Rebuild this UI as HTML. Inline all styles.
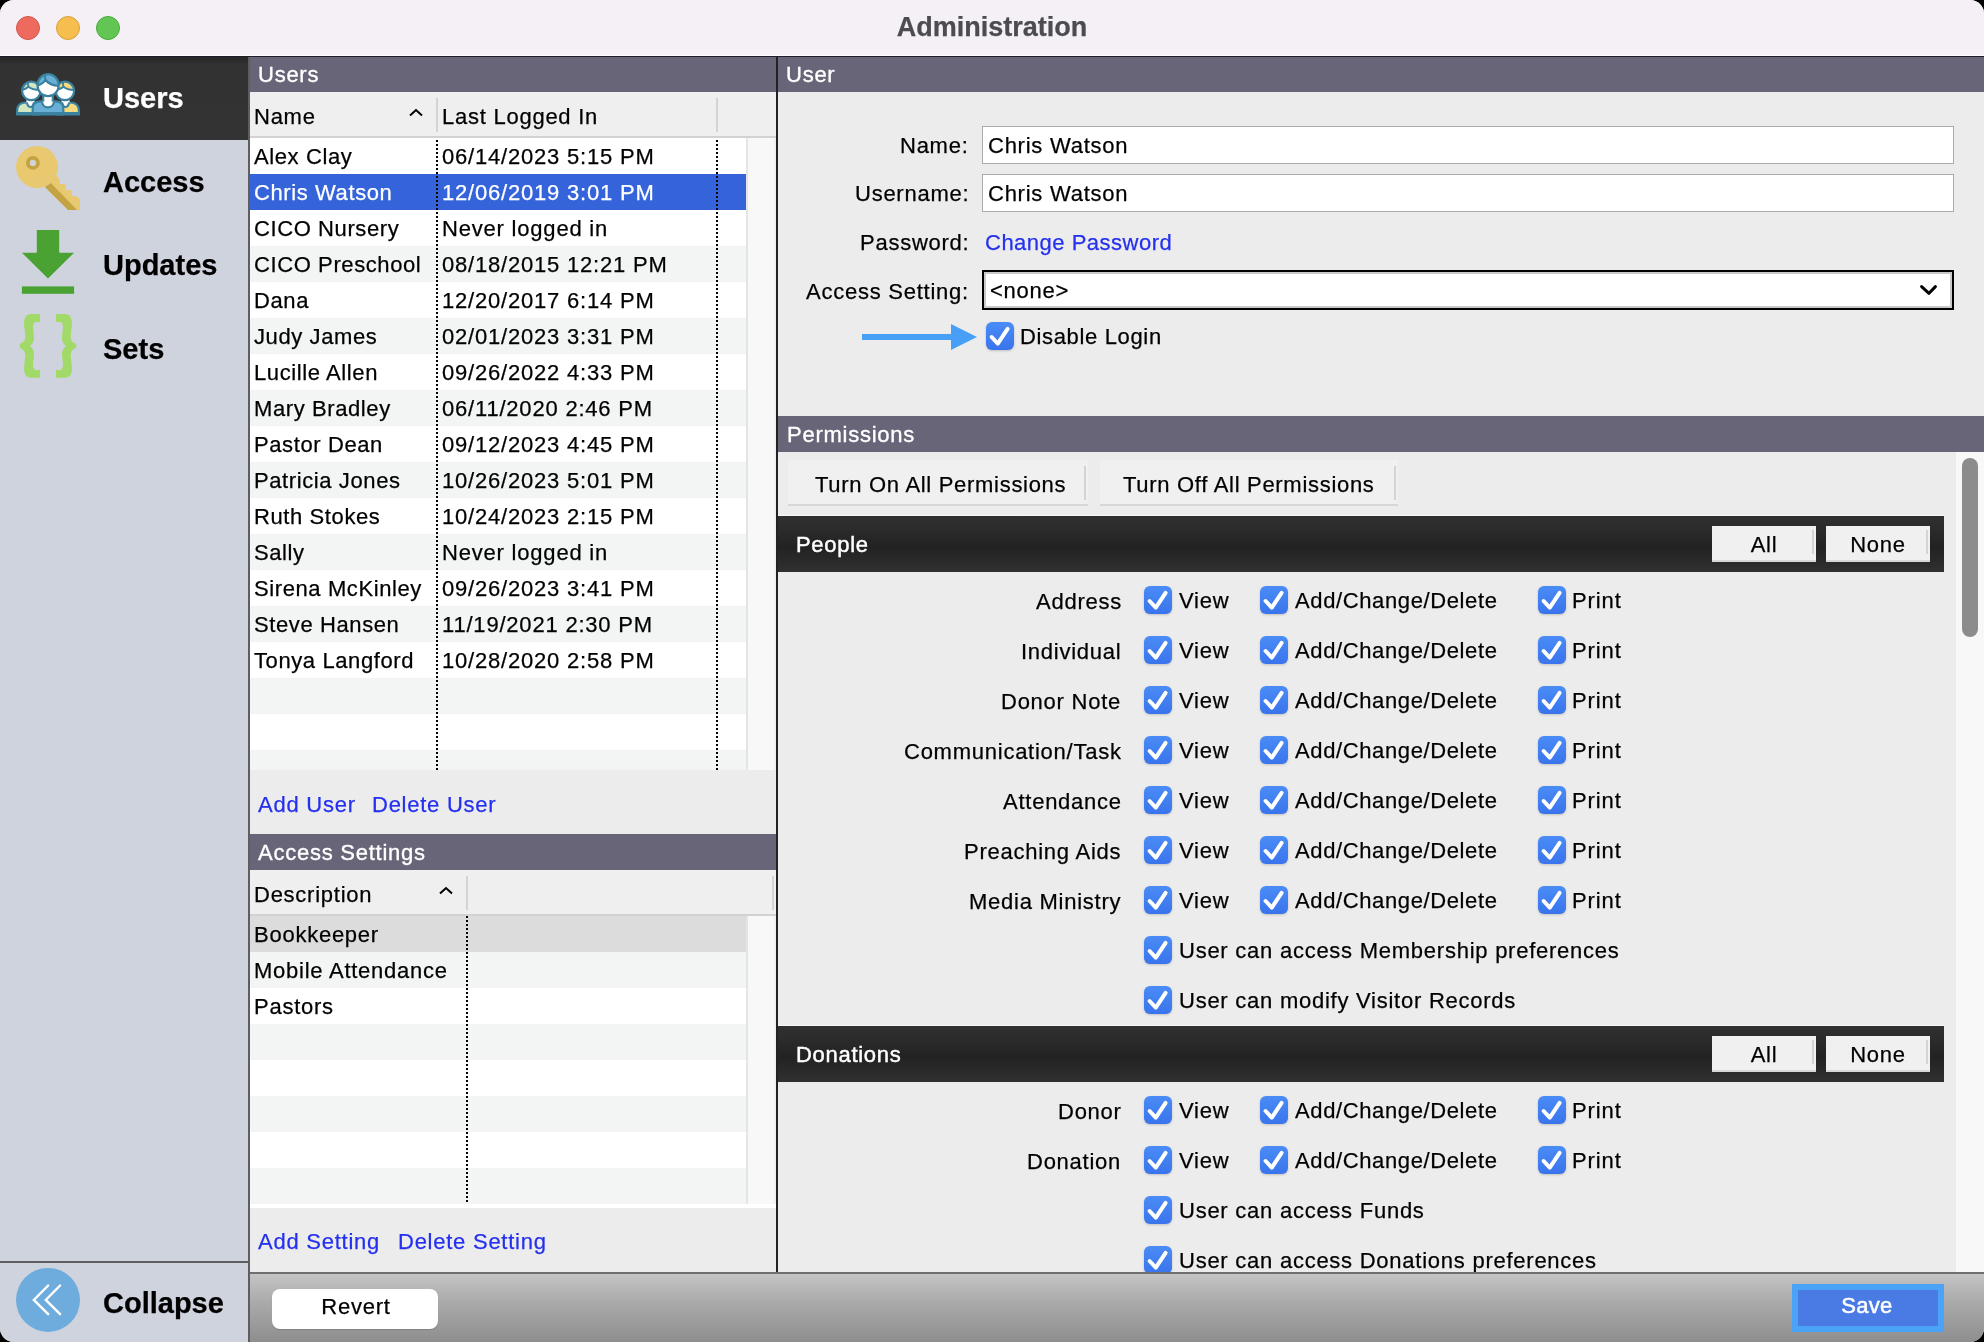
<!DOCTYPE html><html><head><meta charset="utf-8"><style>
html,body{margin:0;padding:0;background:#000;}
body{width:1984px;height:1342px;overflow:hidden;position:relative;font-family:"Liberation Sans",sans-serif;}
#win{position:absolute;left:0;top:0;width:1984px;height:1342px;border-radius:14px;overflow:hidden;background:#ECECEC;}
.t{position:absolute;white-space:nowrap;will-change:transform;-webkit-text-stroke-width:0.25px;}
</style></head><body><div id="win">
<div style="position:absolute;left:0px;top:0px;width:1984px;height:55px;background:#F4F0F6;"></div><div style="position:absolute;left:0px;top:55px;width:1984px;height:1px;background:#FFFFFF;"></div><div style="position:absolute;left:0px;top:56px;width:1984px;height:1px;background:#1F1E28;"></div><div style="position:absolute;left:16px;top:16px;width:22px;height:22px;border-radius:50%;background:#EE6A5E;border:1px solid #D5564B;"></div><div style="position:absolute;left:56px;top:16px;width:22px;height:22px;border-radius:50%;background:#F5BE4F;border:1px solid #D9A13A;"></div><div style="position:absolute;left:96px;top:16px;width:22px;height:22px;border-radius:50%;background:#62C554;border:1px solid #4CA93E;"></div><div class="t" style="left:692px;width:600px;text-align:center;top:14.14px;font-size:27px;line-height:27px;color:#4C4B51;font-weight:bold;letter-spacing:0px;">Administration</div><div style="position:absolute;left:0px;top:57px;width:248px;height:1285px;background:#CFD3DE;"></div><div style="position:absolute;left:248px;top:57px;width:2px;height:1285px;background:#5E5E5E;"></div><div style="position:absolute;left:0px;top:57px;width:248px;height:83px;background:linear-gradient(to bottom,#262626 0px,#323232 8px,#333333 100%);"></div><div class="t" style="left:103px;top:84.45px;font-size:29px;line-height:29px;color:#FFFFFF;font-weight:bold;letter-spacing:0px;">Users</div><div class="t" style="left:103px;top:168.45px;font-size:29px;line-height:29px;color:#000;font-weight:bold;letter-spacing:0px;">Access</div><div class="t" style="left:103px;top:251.45px;font-size:29px;line-height:29px;color:#000;font-weight:bold;letter-spacing:0px;">Updates</div><div class="t" style="left:103px;top:335.45px;font-size:29px;line-height:29px;color:#000;font-weight:bold;letter-spacing:0px;">Sets</div><svg style="position:absolute;left:10px;top:66px" width="80" height="56" viewBox="0 0 80 56">
<defs>
<clipPath id="hc"><ellipse cx="38.1" cy="19.2" rx="10.6" ry="11"/></clipPath>
<clipPath id="hl"><circle cx="21.3" cy="24.9" r="9.2"/></clipPath>
<clipPath id="hr"><circle cx="54.9" cy="24.9" r="9.2"/></clipPath>
</defs>
<g stroke="#3A82A0" stroke-width="2.2" stroke-linejoin="round">
<path d="M7.1,48.5 L7.1,45 C7.1,39.5 10.5,36.5 16,36.5 L24,36.5 C28,36.5 30,39 30,43 L30,48.5 Z" fill="#D3E6C2"/>
<path d="M68.9,48.5 L68.9,45 C68.9,39.5 65.5,36.5 60,36.5 L52,36.5 C48,36.5 46,39 46,43 L46,48.5 Z" fill="#F6DA7E"/>
<rect x="16.5" y="30" width="8" height="7" fill="#FFFFFF" stroke="none"/>
<rect x="51.5" y="30" width="8" height="7" fill="#FFFFFF" stroke="none"/>
<path d="M16.8,36.5 C17.5,39.5 18.8,41 20.5,41 C22,41 23.3,39.5 24,36.5" fill="#FFFFFF"/>
<path d="M59.2,36.5 C58.5,39.5 57.2,41 55.5,41 C54,41 52.7,39.5 52,36.5" fill="#FFFFFF"/>
<circle cx="21.3" cy="24.9" r="9.2" fill="#FFFFFF" stroke="none"/>
<circle cx="54.9" cy="24.9" r="9.2" fill="#FFFFFF" stroke="none"/>
</g>
<g clip-path="url(#hl)"><path d="M11,24.5 C14,23.5 16.5,22.5 18.4,20.7 C20.5,23 24,24 31,24 L31,14 L11,14 Z" fill="#D3E6C2" stroke="#3A82A0" stroke-width="2"/><path d="M18.4,20.7 L17.6,15" stroke="#3A82A0" stroke-width="1.8"/></g>
<g clip-path="url(#hr)"><path d="M45,24.5 C48,23.5 51.5,22.5 53.4,20.7 C55.5,23 59,24 65,24 L65,14 L45,14 Z" fill="#F6DA7E" stroke="#3A82A0" stroke-width="2"/><path d="M53.4,20.7 L52.6,15" stroke="#3A82A0" stroke-width="1.8"/></g>
<g fill="none" stroke="#3A82A0" stroke-width="2.2"><circle cx="21.3" cy="24.9" r="9.2"/><circle cx="54.9" cy="24.9" r="9.2"/></g>
<g stroke="#3A82A0" stroke-width="2.2" stroke-linejoin="round">
<path d="M22.7,48.5 L22.7,42.5 C22.7,38 25.5,35.3 30.5,35.3 L45.5,35.3 C50.5,35.3 53.3,38 53.3,42.5 L53.3,48.5 Z" fill="#6AAFD6"/>
<rect x="33" y="27" width="10" height="9" fill="#FFFFFF" stroke="none"/>
<path d="M32,35.3 C32,39.2 34.6,41.4 38,41.4 C41.4,41.4 44,39.2 44,35.3" fill="#FFFFFF"/>
<line x1="33.2" y1="28" x2="33.2" y2="35.5"/><line x1="42.8" y1="28" x2="42.8" y2="35.5"/>
<ellipse cx="38.1" cy="19.2" rx="10.6" ry="11" fill="#FFFFFF" stroke="none"/>
</g>
<g clip-path="url(#hc)"><path d="M26,20 C30,19 33.5,17 35.5,14 C38.5,18 43,19.8 50,19.8 L50,5 L26,5 Z" fill="#6AAFD6" stroke="#3A82A0" stroke-width="2.2"/><path d="M35.5,14 L34.6,7" stroke="#3A82A0" stroke-width="2"/></g>
<ellipse cx="38.1" cy="19.2" rx="10.6" ry="11" fill="none" stroke="#3A82A0" stroke-width="2.2"/>
<rect x="6" y="46" width="64" height="3" fill="#3A82A0"/>
</svg><svg style="position:absolute;left:10px;top:140px" width="80" height="75" viewBox="0 0 80 75">
<path d="M46.1,35.2 L49.7,39.4 L49.7,44 L55.6,44 L55.6,50 L61.6,50.3 L61.8,56 L66,56 L70,59 L70,69.9 L58.1,69.9 L34.9,47 L40.8,43 Z" fill="#E8C96F"/>
<path d="M34.9,47 L40.8,43 L67,69.9 L58.1,69.9 Z" fill="#C4A344"/>
<circle cx="27" cy="27" r="21" fill="#E8C96F"/>
<circle cx="22.9" cy="22.9" r="5" fill="none" stroke="#C4A344" stroke-width="3.8"/>
<circle cx="22.9" cy="22.9" r="3" fill="#CFD3DE"/>
</svg><svg style="position:absolute;left:10px;top:222px" width="80" height="80" viewBox="0 0 80 80">
<path d="M26.8,8 L49.2,8 L49.2,30.7 L64.1,30.7 L38,56.6 L11.9,30.7 L26.8,30.7 Z" fill="#4AA232"/>
<rect x="11.9" y="64.4" width="52.2" height="7.4" fill="#4AA232"/>
</svg><svg style="position:absolute;left:10px;top:306px" width="80" height="80" viewBox="0 0 80 80">
<g fill="#A2DA6A">
<path d="M30.1,8 L21,8 C16,8 14,12 14,18 L15.2,29 C15.6,34.5 13.5,36.5 9.8,37.8 L9.8,42 C13.5,43.5 15.6,45.5 15.2,51 L14,62 C14,68 16,71.8 21,71.8 L30.1,71.8 L30.1,64 L27,64 C24,64 23,62 23,58.5 L24,50 C24.5,45 22.5,42 20,40 C22.5,38 24.5,35 24,30 L23,21.5 C23,18 24,16 27,16 L30.1,16 Z"/>
<path d="M45.9,8 L55,8 C60,8 62,12 62,18 L60.8,29 C60.4,34.5 62.5,36.5 66.2,37.8 L66.2,42 C62.5,43.5 60.4,45.5 60.8,51 L62,62 C62,68 60,71.8 55,71.8 L45.9,71.8 L45.9,64 L49,64 C52,64 53,62 53,58.5 L52,50 C51.5,45 53.5,42 56,40 C53.5,38 51.5,35 52,30 L53,21.5 C53,18 52,16 49,16 L45.9,16 Z"/>
</g></svg><div style="position:absolute;left:0px;top:1261px;width:248px;height:2px;background:#5E5E5E;"></div><svg style="position:absolute;left:10px;top:1262px" width="80" height="80" viewBox="0 0 80 80">
<circle cx="38" cy="37.9" r="32" fill="#6EACDE"/>
<path d="M38.2,23.5 L23.8,37.9 L38.2,52.2 M50.1,23.5 L35.8,37.9 L50.1,52.2" fill="none" stroke="#fff" stroke-width="2.4" stroke-linecap="round" stroke-linejoin="miter"/>
</svg><div class="t" style="left:103px;top:1289.45px;font-size:29px;line-height:29px;color:#000;font-weight:bold;letter-spacing:0px;">Collapse</div><div style="position:absolute;left:250px;top:57px;width:526px;height:35px;background:#686579;"></div><div class="t" style="left:258px;top:64.37px;font-size:22px;line-height:22px;color:#FFFFFF;font-weight:normal;letter-spacing:0.75px;-webkit-text-stroke:0.35px #fff;">Users</div><div style="position:absolute;left:250px;top:92px;width:526px;height:44px;background:#EFEFEF;"></div><div style="position:absolute;left:250px;top:136px;width:526px;height:2px;background:#D2D2D2;"></div><div class="t" style="left:254px;top:106.37px;font-size:22px;line-height:22px;color:#000;font-weight:normal;letter-spacing:0.75px;">Name</div><svg style="position:absolute;left:408px;top:108px" width="16" height="10" viewBox="0 0 16 10"><path d="M2,7.6 L8,2 L14,7.6" fill="none" stroke="#000" stroke-width="2"/></svg><div style="position:absolute;left:436px;top:98px;width:2px;height:34px;background:#D4D4D4;"></div><div class="t" style="left:442px;top:106.37px;font-size:22px;line-height:22px;color:#000;font-weight:normal;letter-spacing:0.75px;">Last Logged In</div><div style="position:absolute;left:716px;top:98px;width:2px;height:34px;background:#D4D4D4;"></div><div style="position:absolute;left:746px;top:138px;width:30px;height:632px;background:#F8F8F8;border-left:2px solid #E5E5E5;border-right:2px solid #F0F0F0;box-sizing:border-box;"></div><div style="position:absolute;left:250px;top:138px;width:496px;height:36px;background:#FFFFFF;"></div><div style="position:absolute;left:250px;top:174px;width:496px;height:36px;background:#3563D9;"></div><div style="position:absolute;left:250px;top:210px;width:496px;height:36px;background:#FFFFFF;"></div><div style="position:absolute;left:250px;top:246px;width:496px;height:36px;background:#F3F4F4;"></div><div style="position:absolute;left:250px;top:282px;width:496px;height:36px;background:#FFFFFF;"></div><div style="position:absolute;left:250px;top:318px;width:496px;height:36px;background:#F3F4F4;"></div><div style="position:absolute;left:250px;top:354px;width:496px;height:36px;background:#FFFFFF;"></div><div style="position:absolute;left:250px;top:390px;width:496px;height:36px;background:#F3F4F4;"></div><div style="position:absolute;left:250px;top:426px;width:496px;height:36px;background:#FFFFFF;"></div><div style="position:absolute;left:250px;top:462px;width:496px;height:36px;background:#F3F4F4;"></div><div style="position:absolute;left:250px;top:498px;width:496px;height:36px;background:#FFFFFF;"></div><div style="position:absolute;left:250px;top:534px;width:496px;height:36px;background:#F3F4F4;"></div><div style="position:absolute;left:250px;top:570px;width:496px;height:36px;background:#FFFFFF;"></div><div style="position:absolute;left:250px;top:606px;width:496px;height:36px;background:#F3F4F4;"></div><div style="position:absolute;left:250px;top:642px;width:496px;height:36px;background:#FFFFFF;"></div><div style="position:absolute;left:250px;top:678px;width:496px;height:36px;background:#F3F4F4;"></div><div style="position:absolute;left:250px;top:714px;width:496px;height:36px;background:#FFFFFF;"></div><div style="position:absolute;left:250px;top:750px;width:496px;height:20px;background:#F3F4F4;"></div><div style="position:absolute;left:436px;top:138px;width:2px;height:632px;background-image:repeating-linear-gradient(to bottom,transparent 0px,transparent 2px,#000 2px,#000 4px);"></div><div style="position:absolute;left:716px;top:138px;width:2px;height:632px;background-image:repeating-linear-gradient(to bottom,transparent 0px,transparent 2px,#000 2px,#000 4px);"></div><div class="t" style="left:254px;top:146.37px;font-size:22px;line-height:22px;color:#000;font-weight:normal;letter-spacing:0.6px;">Alex Clay</div><div class="t" style="left:442px;top:146.37px;font-size:22px;line-height:22px;color:#000;font-weight:normal;letter-spacing:0.8px;">06/14/2023 5:15 PM</div><div class="t" style="left:254px;top:182.37px;font-size:22px;line-height:22px;color:#FFFFFF;font-weight:normal;letter-spacing:0.6px;">Chris Watson</div><div class="t" style="left:442px;top:182.37px;font-size:22px;line-height:22px;color:#FFFFFF;font-weight:normal;letter-spacing:0.8px;">12/06/2019 3:01 PM</div><div class="t" style="left:254px;top:218.37px;font-size:22px;line-height:22px;color:#000;font-weight:normal;letter-spacing:0.6px;">CICO Nursery</div><div class="t" style="left:442px;top:218.37px;font-size:22px;line-height:22px;color:#000;font-weight:normal;letter-spacing:0.8px;">Never logged in</div><div class="t" style="left:254px;top:254.37px;font-size:22px;line-height:22px;color:#000;font-weight:normal;letter-spacing:0.6px;">CICO Preschool</div><div class="t" style="left:442px;top:254.37px;font-size:22px;line-height:22px;color:#000;font-weight:normal;letter-spacing:0.8px;">08/18/2015 12:21 PM</div><div class="t" style="left:254px;top:290.37px;font-size:22px;line-height:22px;color:#000;font-weight:normal;letter-spacing:0.6px;">Dana</div><div class="t" style="left:442px;top:290.37px;font-size:22px;line-height:22px;color:#000;font-weight:normal;letter-spacing:0.8px;">12/20/2017 6:14 PM</div><div class="t" style="left:254px;top:326.37px;font-size:22px;line-height:22px;color:#000;font-weight:normal;letter-spacing:0.6px;">Judy James</div><div class="t" style="left:442px;top:326.37px;font-size:22px;line-height:22px;color:#000;font-weight:normal;letter-spacing:0.8px;">02/01/2023 3:31 PM</div><div class="t" style="left:254px;top:362.37px;font-size:22px;line-height:22px;color:#000;font-weight:normal;letter-spacing:0.6px;">Lucille Allen</div><div class="t" style="left:442px;top:362.37px;font-size:22px;line-height:22px;color:#000;font-weight:normal;letter-spacing:0.8px;">09/26/2022 4:33 PM</div><div class="t" style="left:254px;top:398.37px;font-size:22px;line-height:22px;color:#000;font-weight:normal;letter-spacing:0.6px;">Mary Bradley</div><div class="t" style="left:442px;top:398.37px;font-size:22px;line-height:22px;color:#000;font-weight:normal;letter-spacing:0.8px;">06/11/2020 2:46 PM</div><div class="t" style="left:254px;top:434.37px;font-size:22px;line-height:22px;color:#000;font-weight:normal;letter-spacing:0.6px;">Pastor Dean</div><div class="t" style="left:442px;top:434.37px;font-size:22px;line-height:22px;color:#000;font-weight:normal;letter-spacing:0.8px;">09/12/2023 4:45 PM</div><div class="t" style="left:254px;top:470.37px;font-size:22px;line-height:22px;color:#000;font-weight:normal;letter-spacing:0.6px;">Patricia Jones</div><div class="t" style="left:442px;top:470.37px;font-size:22px;line-height:22px;color:#000;font-weight:normal;letter-spacing:0.8px;">10/26/2023 5:01 PM</div><div class="t" style="left:254px;top:506.37px;font-size:22px;line-height:22px;color:#000;font-weight:normal;letter-spacing:0.6px;">Ruth Stokes</div><div class="t" style="left:442px;top:506.37px;font-size:22px;line-height:22px;color:#000;font-weight:normal;letter-spacing:0.8px;">10/24/2023 2:15 PM</div><div class="t" style="left:254px;top:542.37px;font-size:22px;line-height:22px;color:#000;font-weight:normal;letter-spacing:0.6px;">Sally</div><div class="t" style="left:442px;top:542.37px;font-size:22px;line-height:22px;color:#000;font-weight:normal;letter-spacing:0.8px;">Never logged in</div><div class="t" style="left:254px;top:578.37px;font-size:22px;line-height:22px;color:#000;font-weight:normal;letter-spacing:0.6px;">Sirena McKinley</div><div class="t" style="left:442px;top:578.37px;font-size:22px;line-height:22px;color:#000;font-weight:normal;letter-spacing:0.8px;">09/26/2023 3:41 PM</div><div class="t" style="left:254px;top:614.37px;font-size:22px;line-height:22px;color:#000;font-weight:normal;letter-spacing:0.6px;">Steve Hansen</div><div class="t" style="left:442px;top:614.37px;font-size:22px;line-height:22px;color:#000;font-weight:normal;letter-spacing:0.8px;">11/19/2021 2:30 PM</div><div class="t" style="left:254px;top:650.37px;font-size:22px;line-height:22px;color:#000;font-weight:normal;letter-spacing:0.6px;">Tonya Langford</div><div class="t" style="left:442px;top:650.37px;font-size:22px;line-height:22px;color:#000;font-weight:normal;letter-spacing:0.8px;">10/28/2020 2:58 PM</div><div class="t" style="left:258px;top:794.37px;font-size:22px;line-height:22px;color:#2430EE;font-weight:normal;letter-spacing:0.75px;">Add User</div><div class="t" style="left:372px;top:794.37px;font-size:22px;line-height:22px;color:#2430EE;font-weight:normal;letter-spacing:0.75px;">Delete User</div><div style="position:absolute;left:250px;top:834px;width:526px;height:36px;background:#686579;"></div><div class="t" style="left:258px;top:842.37px;font-size:22px;line-height:22px;color:#FFFFFF;font-weight:normal;letter-spacing:0.75px;-webkit-text-stroke:0.35px #fff;">Access Settings</div><div style="position:absolute;left:250px;top:870px;width:526px;height:44px;background:#EFEFEF;"></div><div style="position:absolute;left:250px;top:914px;width:526px;height:2px;background:#D2D2D2;"></div><div class="t" style="left:254px;top:884.37px;font-size:22px;line-height:22px;color:#000;font-weight:normal;letter-spacing:0.75px;">Description</div><svg style="position:absolute;left:438px;top:886px" width="16" height="10" viewBox="0 0 16 10"><path d="M2,7.6 L8,2 L14,7.6" fill="none" stroke="#000" stroke-width="2"/></svg><div style="position:absolute;left:466px;top:876px;width:2px;height:34px;background:#D4D4D4;"></div><div style="position:absolute;left:772px;top:876px;width:2px;height:34px;background:#D4D4D4;"></div><div style="position:absolute;left:746px;top:916px;width:30px;height:288px;background:#F8F8F8;border-left:2px solid #E5E5E5;border-right:2px solid #F0F0F0;box-sizing:border-box;"></div><div style="position:absolute;left:250px;top:916px;width:496px;height:36px;background:#DCDCDC;"></div><div style="position:absolute;left:250px;top:952px;width:496px;height:36px;background:#F3F4F4;"></div><div style="position:absolute;left:250px;top:988px;width:496px;height:36px;background:#FFFFFF;"></div><div style="position:absolute;left:250px;top:1024px;width:496px;height:36px;background:#F3F4F4;"></div><div style="position:absolute;left:250px;top:1060px;width:496px;height:36px;background:#FFFFFF;"></div><div style="position:absolute;left:250px;top:1096px;width:496px;height:36px;background:#F3F4F4;"></div><div style="position:absolute;left:250px;top:1132px;width:496px;height:36px;background:#FFFFFF;"></div><div style="position:absolute;left:250px;top:1168px;width:496px;height:36px;background:#F3F4F4;"></div><div style="position:absolute;left:250px;top:1204px;width:526px;height:4px;background:#FFFFFF;"></div><div style="position:absolute;left:466px;top:916px;width:2px;height:288px;background-image:repeating-linear-gradient(to bottom,#000 0px,#000 2px,transparent 2px,transparent 4px);"></div><div class="t" style="left:254px;top:924.37px;font-size:22px;line-height:22px;color:#000;font-weight:normal;letter-spacing:0.75px;">Bookkeeper</div><div class="t" style="left:254px;top:960.37px;font-size:22px;line-height:22px;color:#000;font-weight:normal;letter-spacing:0.75px;">Mobile Attendance</div><div class="t" style="left:254px;top:996.37px;font-size:22px;line-height:22px;color:#000;font-weight:normal;letter-spacing:0.75px;">Pastors</div><div class="t" style="left:258px;top:1231.37px;font-size:22px;line-height:22px;color:#2430EE;font-weight:normal;letter-spacing:0.75px;">Add Setting</div><div class="t" style="left:398px;top:1231.37px;font-size:22px;line-height:22px;color:#2430EE;font-weight:normal;letter-spacing:0.75px;">Delete Setting</div><div style="position:absolute;left:776px;top:57px;width:2px;height:1215px;background:#222222;"></div><div style="position:absolute;left:778px;top:57px;width:1206px;height:35px;background:#686579;"></div><div class="t" style="left:786px;top:64.37px;font-size:22px;line-height:22px;color:#FFFFFF;font-weight:normal;letter-spacing:0.75px;-webkit-text-stroke:0.35px #fff;">User</div><div style="position:absolute;left:778px;top:92px;width:1206px;height:324px;background:#ECECEC;"></div><div class="t" style="right:1015px;top:135.37px;font-size:22px;line-height:22px;color:#000;font-weight:normal;letter-spacing:0.75px;">Name:</div><div class="t" style="right:1015px;top:183.37px;font-size:22px;line-height:22px;color:#000;font-weight:normal;letter-spacing:0.75px;">Username:</div><div class="t" style="right:1015px;top:232.37px;font-size:22px;line-height:22px;color:#000;font-weight:normal;letter-spacing:0.75px;">Password:</div><div class="t" style="right:1015px;top:281.37px;font-size:22px;line-height:22px;color:#000;font-weight:normal;letter-spacing:0.75px;">Access Setting:</div><div style="position:absolute;left:982px;top:126px;width:970px;height:36px;background:#FFFFFF;border:1px solid #ABABAB;"></div><div style="position:absolute;left:982px;top:174px;width:970px;height:36px;background:#FFFFFF;border:1px solid #ABABAB;"></div><div class="t" style="left:988px;top:135.37px;font-size:22px;line-height:22px;color:#000;font-weight:normal;letter-spacing:0.75px;">Chris Watson</div><div class="t" style="left:988px;top:183.37px;font-size:22px;line-height:22px;color:#000;font-weight:normal;letter-spacing:0.75px;">Chris Watson</div><div class="t" style="left:985px;top:232.37px;font-size:22px;line-height:22px;color:#2430EE;font-weight:normal;letter-spacing:0.5px;">Change Password</div><div style="position:absolute;left:982px;top:270px;width:968px;height:36px;background:#FFFFFF;border:2px solid #000;box-shadow:inset 0 0 0 2px #C9C9C9;"></div><div class="t" style="left:990px;top:280.37px;font-size:22px;line-height:22px;color:#000;font-weight:normal;letter-spacing:0.75px;">&lt;none&gt;</div><svg style="position:absolute;left:1916px;top:280px" width="24" height="20" viewBox="0 0 24 20"><path d="M5.6,6.6 L13,13.3 L19.4,6.6" fill="none" stroke="#000" stroke-width="3" stroke-linecap="round" stroke-linejoin="round"/></svg><svg style="position:absolute;left:855px;top:318px" width="130" height="36" viewBox="0 0 130 36"><rect x="7" y="16" width="92" height="6" fill="#48A0F6"/><path d="M96,6 L122,19 L96,32 Z" fill="#48A0F6"/></svg><div style="position:absolute;left:986px;top:322px;width:28px;height:28px;filter:drop-shadow(0 1px 1px rgba(0,0,0,0.18))"><svg width="28" height="28" viewBox="0 0 28 28"><defs><linearGradient id="cg" x1="0" y1="0" x2="0" y2="1"><stop offset="0" stop-color="#4A8CF6"/><stop offset="1" stop-color="#3A74EC"/></linearGradient></defs><rect x="0" y="0" width="28" height="28" rx="6" fill="url(#cg)"/><path d="M5.6 15 L11.8 21.6 L21.6 6.8" fill="none" stroke="#fff" stroke-width="4" stroke-linecap="round" stroke-linejoin="round"/></svg></div><div class="t" style="left:1019.5px;top:326.37px;font-size:22px;line-height:22px;color:#000;font-weight:normal;letter-spacing:0.65px;">Disable Login</div><div style="position:absolute;left:778px;top:416px;width:1206px;height:36px;background:#686579;"></div><div class="t" style="left:787px;top:424.37px;font-size:22px;line-height:22px;color:#FFFFFF;font-weight:normal;letter-spacing:0.75px;-webkit-text-stroke:0.35px #fff;">Permissions</div><div style="position:absolute;left:778px;top:452px;width:1206px;height:820px;background:#ECECEC;"></div><div style="position:absolute;left:1956px;top:452px;width:28px;height:820px;background:#F8F8F8;"></div><div style="position:absolute;left:1962px;top:458px;width:16px;height:179px;background:#8C8C8C;border-radius:8px;"></div><div style="position:absolute;left:788px;top:460px;width:300px;height:46px;background:#F0F0F0;box-sizing:border-box;border-bottom:2px solid #D7D7D7;"></div><div style="position:absolute;left:1084px;top:466px;width:2px;height:34px;background:#D3D3D3;"></div><div class="t" style="left:814.5px;top:474.37px;font-size:22px;line-height:22px;color:#000;font-weight:normal;letter-spacing:0.7px;">Turn On All Permissions</div><div style="position:absolute;left:1100px;top:460px;width:298px;height:46px;background:#F0F0F0;box-sizing:border-box;border-bottom:2px solid #D7D7D7;"></div><div style="position:absolute;left:1394px;top:466px;width:2px;height:34px;background:#D3D3D3;"></div><div class="t" style="left:1123px;top:474.37px;font-size:22px;line-height:22px;color:#000;font-weight:normal;letter-spacing:0.7px;">Turn Off All Permissions</div><div style="position:absolute;left:778px;top:515px;width:1166px;height:1px;background:#F8F8F8;"></div><div style="position:absolute;left:778px;top:516px;width:1166px;height:56px;background:linear-gradient(to bottom,#303030 0%,#2B2B2B 25%,#222222 55%,#2A2A2A 80%,#303030 100%);"></div><div class="t" style="left:796px;top:534.37px;font-size:22px;line-height:22px;color:#FFFFFF;font-weight:normal;letter-spacing:0.7px;-webkit-text-stroke:0.45px #fff;">People</div><div style="position:absolute;left:1712px;top:526px;width:104px;height:36px;background:#F0F0F0;box-sizing:border-box;border-bottom:2px solid #D7D7D7;"></div><div style="position:absolute;left:1812px;top:530px;width:2px;height:24px;background:#D3D3D3;"></div><div class="t" style="left:1464.0px;width:600px;text-align:center;top:534.37px;font-size:22px;line-height:22px;color:#000;font-weight:normal;letter-spacing:0.75px;">All</div><div style="position:absolute;left:1826px;top:526px;width:104px;height:36px;background:#F0F0F0;box-sizing:border-box;border-bottom:2px solid #D7D7D7;"></div><div style="position:absolute;left:1926px;top:530px;width:2px;height:24px;background:#D3D3D3;"></div><div class="t" style="left:1578.0px;width:600px;text-align:center;top:534.37px;font-size:22px;line-height:22px;color:#000;font-weight:normal;letter-spacing:0.75px;">None</div><div class="t" style="right:862.5px;top:591.37px;font-size:22px;line-height:22px;color:#000;font-weight:normal;letter-spacing:0.75px;">Address</div><div style="position:absolute;left:1144px;top:586px;width:28px;height:28px;filter:drop-shadow(0 1px 1px rgba(0,0,0,0.18))"><svg width="28" height="28" viewBox="0 0 28 28"><defs><linearGradient id="cg" x1="0" y1="0" x2="0" y2="1"><stop offset="0" stop-color="#4A8CF6"/><stop offset="1" stop-color="#3A74EC"/></linearGradient></defs><rect x="0" y="0" width="28" height="28" rx="6" fill="url(#cg)"/><path d="M5.6 15 L11.8 21.6 L21.6 6.8" fill="none" stroke="#fff" stroke-width="4" stroke-linecap="round" stroke-linejoin="round"/></svg></div><div class="t" style="left:1179px;top:589.87px;font-size:22px;line-height:22px;color:#000;font-weight:normal;letter-spacing:0.75px;">View</div><div style="position:absolute;left:1260px;top:586px;width:28px;height:28px;filter:drop-shadow(0 1px 1px rgba(0,0,0,0.18))"><svg width="28" height="28" viewBox="0 0 28 28"><defs><linearGradient id="cg" x1="0" y1="0" x2="0" y2="1"><stop offset="0" stop-color="#4A8CF6"/><stop offset="1" stop-color="#3A74EC"/></linearGradient></defs><rect x="0" y="0" width="28" height="28" rx="6" fill="url(#cg)"/><path d="M5.6 15 L11.8 21.6 L21.6 6.8" fill="none" stroke="#fff" stroke-width="4" stroke-linecap="round" stroke-linejoin="round"/></svg></div><div class="t" style="left:1295px;top:589.87px;font-size:22px;line-height:22px;color:#000;font-weight:normal;letter-spacing:0.62px;">Add/Change/Delete</div><div style="position:absolute;left:1538px;top:586px;width:28px;height:28px;filter:drop-shadow(0 1px 1px rgba(0,0,0,0.18))"><svg width="28" height="28" viewBox="0 0 28 28"><defs><linearGradient id="cg" x1="0" y1="0" x2="0" y2="1"><stop offset="0" stop-color="#4A8CF6"/><stop offset="1" stop-color="#3A74EC"/></linearGradient></defs><rect x="0" y="0" width="28" height="28" rx="6" fill="url(#cg)"/><path d="M5.6 15 L11.8 21.6 L21.6 6.8" fill="none" stroke="#fff" stroke-width="4" stroke-linecap="round" stroke-linejoin="round"/></svg></div><div class="t" style="left:1572px;top:589.87px;font-size:22px;line-height:22px;color:#000;font-weight:normal;letter-spacing:0.9px;">Print</div><div class="t" style="right:862.5px;top:641.37px;font-size:22px;line-height:22px;color:#000;font-weight:normal;letter-spacing:0.75px;">Individual</div><div style="position:absolute;left:1144px;top:636px;width:28px;height:28px;filter:drop-shadow(0 1px 1px rgba(0,0,0,0.18))"><svg width="28" height="28" viewBox="0 0 28 28"><defs><linearGradient id="cg" x1="0" y1="0" x2="0" y2="1"><stop offset="0" stop-color="#4A8CF6"/><stop offset="1" stop-color="#3A74EC"/></linearGradient></defs><rect x="0" y="0" width="28" height="28" rx="6" fill="url(#cg)"/><path d="M5.6 15 L11.8 21.6 L21.6 6.8" fill="none" stroke="#fff" stroke-width="4" stroke-linecap="round" stroke-linejoin="round"/></svg></div><div class="t" style="left:1179px;top:639.87px;font-size:22px;line-height:22px;color:#000;font-weight:normal;letter-spacing:0.75px;">View</div><div style="position:absolute;left:1260px;top:636px;width:28px;height:28px;filter:drop-shadow(0 1px 1px rgba(0,0,0,0.18))"><svg width="28" height="28" viewBox="0 0 28 28"><defs><linearGradient id="cg" x1="0" y1="0" x2="0" y2="1"><stop offset="0" stop-color="#4A8CF6"/><stop offset="1" stop-color="#3A74EC"/></linearGradient></defs><rect x="0" y="0" width="28" height="28" rx="6" fill="url(#cg)"/><path d="M5.6 15 L11.8 21.6 L21.6 6.8" fill="none" stroke="#fff" stroke-width="4" stroke-linecap="round" stroke-linejoin="round"/></svg></div><div class="t" style="left:1295px;top:639.87px;font-size:22px;line-height:22px;color:#000;font-weight:normal;letter-spacing:0.62px;">Add/Change/Delete</div><div style="position:absolute;left:1538px;top:636px;width:28px;height:28px;filter:drop-shadow(0 1px 1px rgba(0,0,0,0.18))"><svg width="28" height="28" viewBox="0 0 28 28"><defs><linearGradient id="cg" x1="0" y1="0" x2="0" y2="1"><stop offset="0" stop-color="#4A8CF6"/><stop offset="1" stop-color="#3A74EC"/></linearGradient></defs><rect x="0" y="0" width="28" height="28" rx="6" fill="url(#cg)"/><path d="M5.6 15 L11.8 21.6 L21.6 6.8" fill="none" stroke="#fff" stroke-width="4" stroke-linecap="round" stroke-linejoin="round"/></svg></div><div class="t" style="left:1572px;top:639.87px;font-size:22px;line-height:22px;color:#000;font-weight:normal;letter-spacing:0.9px;">Print</div><div class="t" style="right:862.5px;top:691.37px;font-size:22px;line-height:22px;color:#000;font-weight:normal;letter-spacing:0.75px;">Donor Note</div><div style="position:absolute;left:1144px;top:686px;width:28px;height:28px;filter:drop-shadow(0 1px 1px rgba(0,0,0,0.18))"><svg width="28" height="28" viewBox="0 0 28 28"><defs><linearGradient id="cg" x1="0" y1="0" x2="0" y2="1"><stop offset="0" stop-color="#4A8CF6"/><stop offset="1" stop-color="#3A74EC"/></linearGradient></defs><rect x="0" y="0" width="28" height="28" rx="6" fill="url(#cg)"/><path d="M5.6 15 L11.8 21.6 L21.6 6.8" fill="none" stroke="#fff" stroke-width="4" stroke-linecap="round" stroke-linejoin="round"/></svg></div><div class="t" style="left:1179px;top:689.87px;font-size:22px;line-height:22px;color:#000;font-weight:normal;letter-spacing:0.75px;">View</div><div style="position:absolute;left:1260px;top:686px;width:28px;height:28px;filter:drop-shadow(0 1px 1px rgba(0,0,0,0.18))"><svg width="28" height="28" viewBox="0 0 28 28"><defs><linearGradient id="cg" x1="0" y1="0" x2="0" y2="1"><stop offset="0" stop-color="#4A8CF6"/><stop offset="1" stop-color="#3A74EC"/></linearGradient></defs><rect x="0" y="0" width="28" height="28" rx="6" fill="url(#cg)"/><path d="M5.6 15 L11.8 21.6 L21.6 6.8" fill="none" stroke="#fff" stroke-width="4" stroke-linecap="round" stroke-linejoin="round"/></svg></div><div class="t" style="left:1295px;top:689.87px;font-size:22px;line-height:22px;color:#000;font-weight:normal;letter-spacing:0.62px;">Add/Change/Delete</div><div style="position:absolute;left:1538px;top:686px;width:28px;height:28px;filter:drop-shadow(0 1px 1px rgba(0,0,0,0.18))"><svg width="28" height="28" viewBox="0 0 28 28"><defs><linearGradient id="cg" x1="0" y1="0" x2="0" y2="1"><stop offset="0" stop-color="#4A8CF6"/><stop offset="1" stop-color="#3A74EC"/></linearGradient></defs><rect x="0" y="0" width="28" height="28" rx="6" fill="url(#cg)"/><path d="M5.6 15 L11.8 21.6 L21.6 6.8" fill="none" stroke="#fff" stroke-width="4" stroke-linecap="round" stroke-linejoin="round"/></svg></div><div class="t" style="left:1572px;top:689.87px;font-size:22px;line-height:22px;color:#000;font-weight:normal;letter-spacing:0.9px;">Print</div><div class="t" style="right:862.5px;top:741.37px;font-size:22px;line-height:22px;color:#000;font-weight:normal;letter-spacing:0.75px;">Communication/Task</div><div style="position:absolute;left:1144px;top:736px;width:28px;height:28px;filter:drop-shadow(0 1px 1px rgba(0,0,0,0.18))"><svg width="28" height="28" viewBox="0 0 28 28"><defs><linearGradient id="cg" x1="0" y1="0" x2="0" y2="1"><stop offset="0" stop-color="#4A8CF6"/><stop offset="1" stop-color="#3A74EC"/></linearGradient></defs><rect x="0" y="0" width="28" height="28" rx="6" fill="url(#cg)"/><path d="M5.6 15 L11.8 21.6 L21.6 6.8" fill="none" stroke="#fff" stroke-width="4" stroke-linecap="round" stroke-linejoin="round"/></svg></div><div class="t" style="left:1179px;top:739.87px;font-size:22px;line-height:22px;color:#000;font-weight:normal;letter-spacing:0.75px;">View</div><div style="position:absolute;left:1260px;top:736px;width:28px;height:28px;filter:drop-shadow(0 1px 1px rgba(0,0,0,0.18))"><svg width="28" height="28" viewBox="0 0 28 28"><defs><linearGradient id="cg" x1="0" y1="0" x2="0" y2="1"><stop offset="0" stop-color="#4A8CF6"/><stop offset="1" stop-color="#3A74EC"/></linearGradient></defs><rect x="0" y="0" width="28" height="28" rx="6" fill="url(#cg)"/><path d="M5.6 15 L11.8 21.6 L21.6 6.8" fill="none" stroke="#fff" stroke-width="4" stroke-linecap="round" stroke-linejoin="round"/></svg></div><div class="t" style="left:1295px;top:739.87px;font-size:22px;line-height:22px;color:#000;font-weight:normal;letter-spacing:0.62px;">Add/Change/Delete</div><div style="position:absolute;left:1538px;top:736px;width:28px;height:28px;filter:drop-shadow(0 1px 1px rgba(0,0,0,0.18))"><svg width="28" height="28" viewBox="0 0 28 28"><defs><linearGradient id="cg" x1="0" y1="0" x2="0" y2="1"><stop offset="0" stop-color="#4A8CF6"/><stop offset="1" stop-color="#3A74EC"/></linearGradient></defs><rect x="0" y="0" width="28" height="28" rx="6" fill="url(#cg)"/><path d="M5.6 15 L11.8 21.6 L21.6 6.8" fill="none" stroke="#fff" stroke-width="4" stroke-linecap="round" stroke-linejoin="round"/></svg></div><div class="t" style="left:1572px;top:739.87px;font-size:22px;line-height:22px;color:#000;font-weight:normal;letter-spacing:0.9px;">Print</div><div class="t" style="right:862.5px;top:791.37px;font-size:22px;line-height:22px;color:#000;font-weight:normal;letter-spacing:0.75px;">Attendance</div><div style="position:absolute;left:1144px;top:786px;width:28px;height:28px;filter:drop-shadow(0 1px 1px rgba(0,0,0,0.18))"><svg width="28" height="28" viewBox="0 0 28 28"><defs><linearGradient id="cg" x1="0" y1="0" x2="0" y2="1"><stop offset="0" stop-color="#4A8CF6"/><stop offset="1" stop-color="#3A74EC"/></linearGradient></defs><rect x="0" y="0" width="28" height="28" rx="6" fill="url(#cg)"/><path d="M5.6 15 L11.8 21.6 L21.6 6.8" fill="none" stroke="#fff" stroke-width="4" stroke-linecap="round" stroke-linejoin="round"/></svg></div><div class="t" style="left:1179px;top:789.87px;font-size:22px;line-height:22px;color:#000;font-weight:normal;letter-spacing:0.75px;">View</div><div style="position:absolute;left:1260px;top:786px;width:28px;height:28px;filter:drop-shadow(0 1px 1px rgba(0,0,0,0.18))"><svg width="28" height="28" viewBox="0 0 28 28"><defs><linearGradient id="cg" x1="0" y1="0" x2="0" y2="1"><stop offset="0" stop-color="#4A8CF6"/><stop offset="1" stop-color="#3A74EC"/></linearGradient></defs><rect x="0" y="0" width="28" height="28" rx="6" fill="url(#cg)"/><path d="M5.6 15 L11.8 21.6 L21.6 6.8" fill="none" stroke="#fff" stroke-width="4" stroke-linecap="round" stroke-linejoin="round"/></svg></div><div class="t" style="left:1295px;top:789.87px;font-size:22px;line-height:22px;color:#000;font-weight:normal;letter-spacing:0.62px;">Add/Change/Delete</div><div style="position:absolute;left:1538px;top:786px;width:28px;height:28px;filter:drop-shadow(0 1px 1px rgba(0,0,0,0.18))"><svg width="28" height="28" viewBox="0 0 28 28"><defs><linearGradient id="cg" x1="0" y1="0" x2="0" y2="1"><stop offset="0" stop-color="#4A8CF6"/><stop offset="1" stop-color="#3A74EC"/></linearGradient></defs><rect x="0" y="0" width="28" height="28" rx="6" fill="url(#cg)"/><path d="M5.6 15 L11.8 21.6 L21.6 6.8" fill="none" stroke="#fff" stroke-width="4" stroke-linecap="round" stroke-linejoin="round"/></svg></div><div class="t" style="left:1572px;top:789.87px;font-size:22px;line-height:22px;color:#000;font-weight:normal;letter-spacing:0.9px;">Print</div><div class="t" style="right:862.5px;top:841.37px;font-size:22px;line-height:22px;color:#000;font-weight:normal;letter-spacing:0.75px;">Preaching Aids</div><div style="position:absolute;left:1144px;top:836px;width:28px;height:28px;filter:drop-shadow(0 1px 1px rgba(0,0,0,0.18))"><svg width="28" height="28" viewBox="0 0 28 28"><defs><linearGradient id="cg" x1="0" y1="0" x2="0" y2="1"><stop offset="0" stop-color="#4A8CF6"/><stop offset="1" stop-color="#3A74EC"/></linearGradient></defs><rect x="0" y="0" width="28" height="28" rx="6" fill="url(#cg)"/><path d="M5.6 15 L11.8 21.6 L21.6 6.8" fill="none" stroke="#fff" stroke-width="4" stroke-linecap="round" stroke-linejoin="round"/></svg></div><div class="t" style="left:1179px;top:839.87px;font-size:22px;line-height:22px;color:#000;font-weight:normal;letter-spacing:0.75px;">View</div><div style="position:absolute;left:1260px;top:836px;width:28px;height:28px;filter:drop-shadow(0 1px 1px rgba(0,0,0,0.18))"><svg width="28" height="28" viewBox="0 0 28 28"><defs><linearGradient id="cg" x1="0" y1="0" x2="0" y2="1"><stop offset="0" stop-color="#4A8CF6"/><stop offset="1" stop-color="#3A74EC"/></linearGradient></defs><rect x="0" y="0" width="28" height="28" rx="6" fill="url(#cg)"/><path d="M5.6 15 L11.8 21.6 L21.6 6.8" fill="none" stroke="#fff" stroke-width="4" stroke-linecap="round" stroke-linejoin="round"/></svg></div><div class="t" style="left:1295px;top:839.87px;font-size:22px;line-height:22px;color:#000;font-weight:normal;letter-spacing:0.62px;">Add/Change/Delete</div><div style="position:absolute;left:1538px;top:836px;width:28px;height:28px;filter:drop-shadow(0 1px 1px rgba(0,0,0,0.18))"><svg width="28" height="28" viewBox="0 0 28 28"><defs><linearGradient id="cg" x1="0" y1="0" x2="0" y2="1"><stop offset="0" stop-color="#4A8CF6"/><stop offset="1" stop-color="#3A74EC"/></linearGradient></defs><rect x="0" y="0" width="28" height="28" rx="6" fill="url(#cg)"/><path d="M5.6 15 L11.8 21.6 L21.6 6.8" fill="none" stroke="#fff" stroke-width="4" stroke-linecap="round" stroke-linejoin="round"/></svg></div><div class="t" style="left:1572px;top:839.87px;font-size:22px;line-height:22px;color:#000;font-weight:normal;letter-spacing:0.9px;">Print</div><div class="t" style="right:862.5px;top:891.37px;font-size:22px;line-height:22px;color:#000;font-weight:normal;letter-spacing:0.75px;">Media Ministry</div><div style="position:absolute;left:1144px;top:886px;width:28px;height:28px;filter:drop-shadow(0 1px 1px rgba(0,0,0,0.18))"><svg width="28" height="28" viewBox="0 0 28 28"><defs><linearGradient id="cg" x1="0" y1="0" x2="0" y2="1"><stop offset="0" stop-color="#4A8CF6"/><stop offset="1" stop-color="#3A74EC"/></linearGradient></defs><rect x="0" y="0" width="28" height="28" rx="6" fill="url(#cg)"/><path d="M5.6 15 L11.8 21.6 L21.6 6.8" fill="none" stroke="#fff" stroke-width="4" stroke-linecap="round" stroke-linejoin="round"/></svg></div><div class="t" style="left:1179px;top:889.87px;font-size:22px;line-height:22px;color:#000;font-weight:normal;letter-spacing:0.75px;">View</div><div style="position:absolute;left:1260px;top:886px;width:28px;height:28px;filter:drop-shadow(0 1px 1px rgba(0,0,0,0.18))"><svg width="28" height="28" viewBox="0 0 28 28"><defs><linearGradient id="cg" x1="0" y1="0" x2="0" y2="1"><stop offset="0" stop-color="#4A8CF6"/><stop offset="1" stop-color="#3A74EC"/></linearGradient></defs><rect x="0" y="0" width="28" height="28" rx="6" fill="url(#cg)"/><path d="M5.6 15 L11.8 21.6 L21.6 6.8" fill="none" stroke="#fff" stroke-width="4" stroke-linecap="round" stroke-linejoin="round"/></svg></div><div class="t" style="left:1295px;top:889.87px;font-size:22px;line-height:22px;color:#000;font-weight:normal;letter-spacing:0.62px;">Add/Change/Delete</div><div style="position:absolute;left:1538px;top:886px;width:28px;height:28px;filter:drop-shadow(0 1px 1px rgba(0,0,0,0.18))"><svg width="28" height="28" viewBox="0 0 28 28"><defs><linearGradient id="cg" x1="0" y1="0" x2="0" y2="1"><stop offset="0" stop-color="#4A8CF6"/><stop offset="1" stop-color="#3A74EC"/></linearGradient></defs><rect x="0" y="0" width="28" height="28" rx="6" fill="url(#cg)"/><path d="M5.6 15 L11.8 21.6 L21.6 6.8" fill="none" stroke="#fff" stroke-width="4" stroke-linecap="round" stroke-linejoin="round"/></svg></div><div class="t" style="left:1572px;top:889.87px;font-size:22px;line-height:22px;color:#000;font-weight:normal;letter-spacing:0.9px;">Print</div><div style="position:absolute;left:1144px;top:936px;width:28px;height:28px;filter:drop-shadow(0 1px 1px rgba(0,0,0,0.18))"><svg width="28" height="28" viewBox="0 0 28 28"><defs><linearGradient id="cg" x1="0" y1="0" x2="0" y2="1"><stop offset="0" stop-color="#4A8CF6"/><stop offset="1" stop-color="#3A74EC"/></linearGradient></defs><rect x="0" y="0" width="28" height="28" rx="6" fill="url(#cg)"/><path d="M5.6 15 L11.8 21.6 L21.6 6.8" fill="none" stroke="#fff" stroke-width="4" stroke-linecap="round" stroke-linejoin="round"/></svg></div><div class="t" style="left:1178.5px;top:939.87px;font-size:22px;line-height:22px;color:#000;font-weight:normal;letter-spacing:0.75px;">User can access Membership preferences</div><div style="position:absolute;left:1144px;top:986px;width:28px;height:28px;filter:drop-shadow(0 1px 1px rgba(0,0,0,0.18))"><svg width="28" height="28" viewBox="0 0 28 28"><defs><linearGradient id="cg" x1="0" y1="0" x2="0" y2="1"><stop offset="0" stop-color="#4A8CF6"/><stop offset="1" stop-color="#3A74EC"/></linearGradient></defs><rect x="0" y="0" width="28" height="28" rx="6" fill="url(#cg)"/><path d="M5.6 15 L11.8 21.6 L21.6 6.8" fill="none" stroke="#fff" stroke-width="4" stroke-linecap="round" stroke-linejoin="round"/></svg></div><div class="t" style="left:1178.5px;top:989.87px;font-size:22px;line-height:22px;color:#000;font-weight:normal;letter-spacing:0.75px;">User can modify Visitor Records</div><div style="position:absolute;left:778px;top:1025px;width:1166px;height:1px;background:#F8F8F8;"></div><div style="position:absolute;left:778px;top:1026px;width:1166px;height:56px;background:linear-gradient(to bottom,#303030 0%,#2B2B2B 25%,#222222 55%,#2A2A2A 80%,#303030 100%);"></div><div class="t" style="left:796px;top:1044.37px;font-size:22px;line-height:22px;color:#FFFFFF;font-weight:normal;letter-spacing:0.7px;-webkit-text-stroke:0.45px #fff;">Donations</div><div style="position:absolute;left:1712px;top:1036px;width:104px;height:36px;background:#F0F0F0;box-sizing:border-box;border-bottom:2px solid #D7D7D7;"></div><div style="position:absolute;left:1812px;top:1040px;width:2px;height:24px;background:#D3D3D3;"></div><div class="t" style="left:1464.0px;width:600px;text-align:center;top:1044.37px;font-size:22px;line-height:22px;color:#000;font-weight:normal;letter-spacing:0.75px;">All</div><div style="position:absolute;left:1826px;top:1036px;width:104px;height:36px;background:#F0F0F0;box-sizing:border-box;border-bottom:2px solid #D7D7D7;"></div><div style="position:absolute;left:1926px;top:1040px;width:2px;height:24px;background:#D3D3D3;"></div><div class="t" style="left:1578.0px;width:600px;text-align:center;top:1044.37px;font-size:22px;line-height:22px;color:#000;font-weight:normal;letter-spacing:0.75px;">None</div><div class="t" style="right:862.5px;top:1101.37px;font-size:22px;line-height:22px;color:#000;font-weight:normal;letter-spacing:0.75px;">Donor</div><div style="position:absolute;left:1144px;top:1096px;width:28px;height:28px;filter:drop-shadow(0 1px 1px rgba(0,0,0,0.18))"><svg width="28" height="28" viewBox="0 0 28 28"><defs><linearGradient id="cg" x1="0" y1="0" x2="0" y2="1"><stop offset="0" stop-color="#4A8CF6"/><stop offset="1" stop-color="#3A74EC"/></linearGradient></defs><rect x="0" y="0" width="28" height="28" rx="6" fill="url(#cg)"/><path d="M5.6 15 L11.8 21.6 L21.6 6.8" fill="none" stroke="#fff" stroke-width="4" stroke-linecap="round" stroke-linejoin="round"/></svg></div><div class="t" style="left:1179px;top:1099.87px;font-size:22px;line-height:22px;color:#000;font-weight:normal;letter-spacing:0.75px;">View</div><div style="position:absolute;left:1260px;top:1096px;width:28px;height:28px;filter:drop-shadow(0 1px 1px rgba(0,0,0,0.18))"><svg width="28" height="28" viewBox="0 0 28 28"><defs><linearGradient id="cg" x1="0" y1="0" x2="0" y2="1"><stop offset="0" stop-color="#4A8CF6"/><stop offset="1" stop-color="#3A74EC"/></linearGradient></defs><rect x="0" y="0" width="28" height="28" rx="6" fill="url(#cg)"/><path d="M5.6 15 L11.8 21.6 L21.6 6.8" fill="none" stroke="#fff" stroke-width="4" stroke-linecap="round" stroke-linejoin="round"/></svg></div><div class="t" style="left:1295px;top:1099.87px;font-size:22px;line-height:22px;color:#000;font-weight:normal;letter-spacing:0.62px;">Add/Change/Delete</div><div style="position:absolute;left:1538px;top:1096px;width:28px;height:28px;filter:drop-shadow(0 1px 1px rgba(0,0,0,0.18))"><svg width="28" height="28" viewBox="0 0 28 28"><defs><linearGradient id="cg" x1="0" y1="0" x2="0" y2="1"><stop offset="0" stop-color="#4A8CF6"/><stop offset="1" stop-color="#3A74EC"/></linearGradient></defs><rect x="0" y="0" width="28" height="28" rx="6" fill="url(#cg)"/><path d="M5.6 15 L11.8 21.6 L21.6 6.8" fill="none" stroke="#fff" stroke-width="4" stroke-linecap="round" stroke-linejoin="round"/></svg></div><div class="t" style="left:1572px;top:1099.87px;font-size:22px;line-height:22px;color:#000;font-weight:normal;letter-spacing:0.9px;">Print</div><div class="t" style="right:862.5px;top:1151.37px;font-size:22px;line-height:22px;color:#000;font-weight:normal;letter-spacing:0.75px;">Donation</div><div style="position:absolute;left:1144px;top:1146px;width:28px;height:28px;filter:drop-shadow(0 1px 1px rgba(0,0,0,0.18))"><svg width="28" height="28" viewBox="0 0 28 28"><defs><linearGradient id="cg" x1="0" y1="0" x2="0" y2="1"><stop offset="0" stop-color="#4A8CF6"/><stop offset="1" stop-color="#3A74EC"/></linearGradient></defs><rect x="0" y="0" width="28" height="28" rx="6" fill="url(#cg)"/><path d="M5.6 15 L11.8 21.6 L21.6 6.8" fill="none" stroke="#fff" stroke-width="4" stroke-linecap="round" stroke-linejoin="round"/></svg></div><div class="t" style="left:1179px;top:1149.87px;font-size:22px;line-height:22px;color:#000;font-weight:normal;letter-spacing:0.75px;">View</div><div style="position:absolute;left:1260px;top:1146px;width:28px;height:28px;filter:drop-shadow(0 1px 1px rgba(0,0,0,0.18))"><svg width="28" height="28" viewBox="0 0 28 28"><defs><linearGradient id="cg" x1="0" y1="0" x2="0" y2="1"><stop offset="0" stop-color="#4A8CF6"/><stop offset="1" stop-color="#3A74EC"/></linearGradient></defs><rect x="0" y="0" width="28" height="28" rx="6" fill="url(#cg)"/><path d="M5.6 15 L11.8 21.6 L21.6 6.8" fill="none" stroke="#fff" stroke-width="4" stroke-linecap="round" stroke-linejoin="round"/></svg></div><div class="t" style="left:1295px;top:1149.87px;font-size:22px;line-height:22px;color:#000;font-weight:normal;letter-spacing:0.62px;">Add/Change/Delete</div><div style="position:absolute;left:1538px;top:1146px;width:28px;height:28px;filter:drop-shadow(0 1px 1px rgba(0,0,0,0.18))"><svg width="28" height="28" viewBox="0 0 28 28"><defs><linearGradient id="cg" x1="0" y1="0" x2="0" y2="1"><stop offset="0" stop-color="#4A8CF6"/><stop offset="1" stop-color="#3A74EC"/></linearGradient></defs><rect x="0" y="0" width="28" height="28" rx="6" fill="url(#cg)"/><path d="M5.6 15 L11.8 21.6 L21.6 6.8" fill="none" stroke="#fff" stroke-width="4" stroke-linecap="round" stroke-linejoin="round"/></svg></div><div class="t" style="left:1572px;top:1149.87px;font-size:22px;line-height:22px;color:#000;font-weight:normal;letter-spacing:0.9px;">Print</div><div style="position:absolute;left:1144px;top:1196px;width:28px;height:28px;filter:drop-shadow(0 1px 1px rgba(0,0,0,0.18))"><svg width="28" height="28" viewBox="0 0 28 28"><defs><linearGradient id="cg" x1="0" y1="0" x2="0" y2="1"><stop offset="0" stop-color="#4A8CF6"/><stop offset="1" stop-color="#3A74EC"/></linearGradient></defs><rect x="0" y="0" width="28" height="28" rx="6" fill="url(#cg)"/><path d="M5.6 15 L11.8 21.6 L21.6 6.8" fill="none" stroke="#fff" stroke-width="4" stroke-linecap="round" stroke-linejoin="round"/></svg></div><div class="t" style="left:1178.5px;top:1199.87px;font-size:22px;line-height:22px;color:#000;font-weight:normal;letter-spacing:0.75px;">User can access Funds</div><div style="position:absolute;left:1144px;top:1246px;width:28px;height:28px;filter:drop-shadow(0 1px 1px rgba(0,0,0,0.18))"><svg width="28" height="28" viewBox="0 0 28 28"><defs><linearGradient id="cg" x1="0" y1="0" x2="0" y2="1"><stop offset="0" stop-color="#4A8CF6"/><stop offset="1" stop-color="#3A74EC"/></linearGradient></defs><rect x="0" y="0" width="28" height="28" rx="6" fill="url(#cg)"/><path d="M5.6 15 L11.8 21.6 L21.6 6.8" fill="none" stroke="#fff" stroke-width="4" stroke-linecap="round" stroke-linejoin="round"/></svg></div><div class="t" style="left:1178.5px;top:1249.87px;font-size:22px;line-height:22px;color:#000;font-weight:normal;letter-spacing:0.75px;">User can access Donations preferences</div><div style="position:absolute;left:250px;top:1272px;width:1734px;height:70px;background:linear-gradient(to bottom,#C4C4C4 0%,#ABABAB 40%,#8E8E8E 100%);border-top:2px solid #6F6F6F;box-sizing:border-box;"></div><div style="position:absolute;left:272px;top:1289px;width:166px;height:40px;background:#FFFFFF;border-radius:8px;box-shadow:0 1px 1px rgba(0,0,0,0.15);"></div><div class="t" style="left:56px;width:600px;text-align:center;top:1295.87px;font-size:22px;line-height:22px;color:#000;font-weight:normal;letter-spacing:0.75px;">Revert</div><div style="position:absolute;left:1792px;top:1284px;width:152px;height:48px;background:#4A7AE3;box-sizing:border-box;border:6px solid #4AA3F7;"></div><div class="t" style="left:1567px;width:600px;text-align:center;top:1295.37px;font-size:22px;line-height:22px;color:#FFFFFF;font-weight:normal;letter-spacing:0.3px;-webkit-text-stroke:0.5px #fff;">Save</div></div></body></html>
